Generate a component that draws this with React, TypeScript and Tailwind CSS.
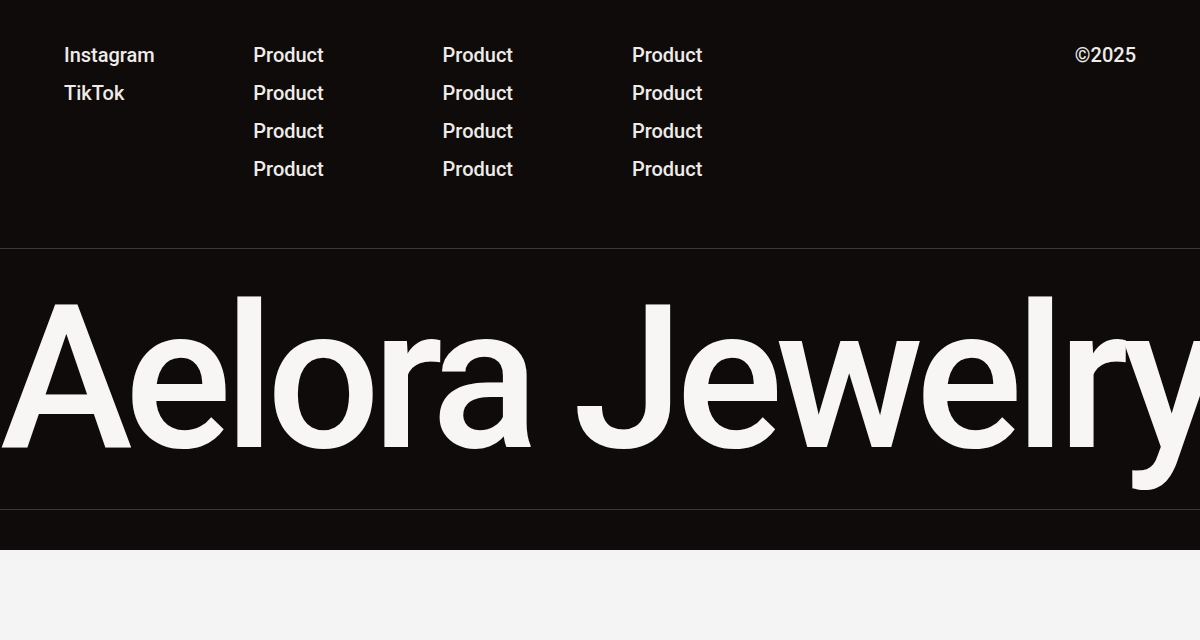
export default function App() {
  const cols = [0, 1, 2];
  return (
    <div className="min-h-screen bg-[#f4f4f5]" style={{ fontFamily: "Roboto, sans-serif" }}>
      <footer className="bg-[#0e0b0a] text-[#eeece9] overflow-hidden">
        <div className="flex px-16 pt-[41px] pb-[65px]">
          <ul className="w-[189.3px] flex flex-col gap-2.5 text-xl font-medium">
            <li>Instagram</li>
            <li>TikTok</li>
          </ul>
          {cols.map((c) => (
            <ul key={c} className="w-[189.3px] flex flex-col gap-2.5 text-xl font-medium">
              <li>Product</li>
              <li>Product</li>
              <li>Product</li>
              <li>Product</li>
            </ul>
          ))}
          <div className="ml-auto text-xl font-medium">©2025</div>
        </div>
        <div className="border-t border-b border-[#3a3837] h-[262px] flex items-center">
          <h1 className="text-[200px] leading-none font-medium tracking-[-0.04em] whitespace-nowrap text-[#f7f6f4]">
            Aelora Jewelry
          </h1>
        </div>
        <div className="h-10" />
      </footer>
    </div>
  );
}
